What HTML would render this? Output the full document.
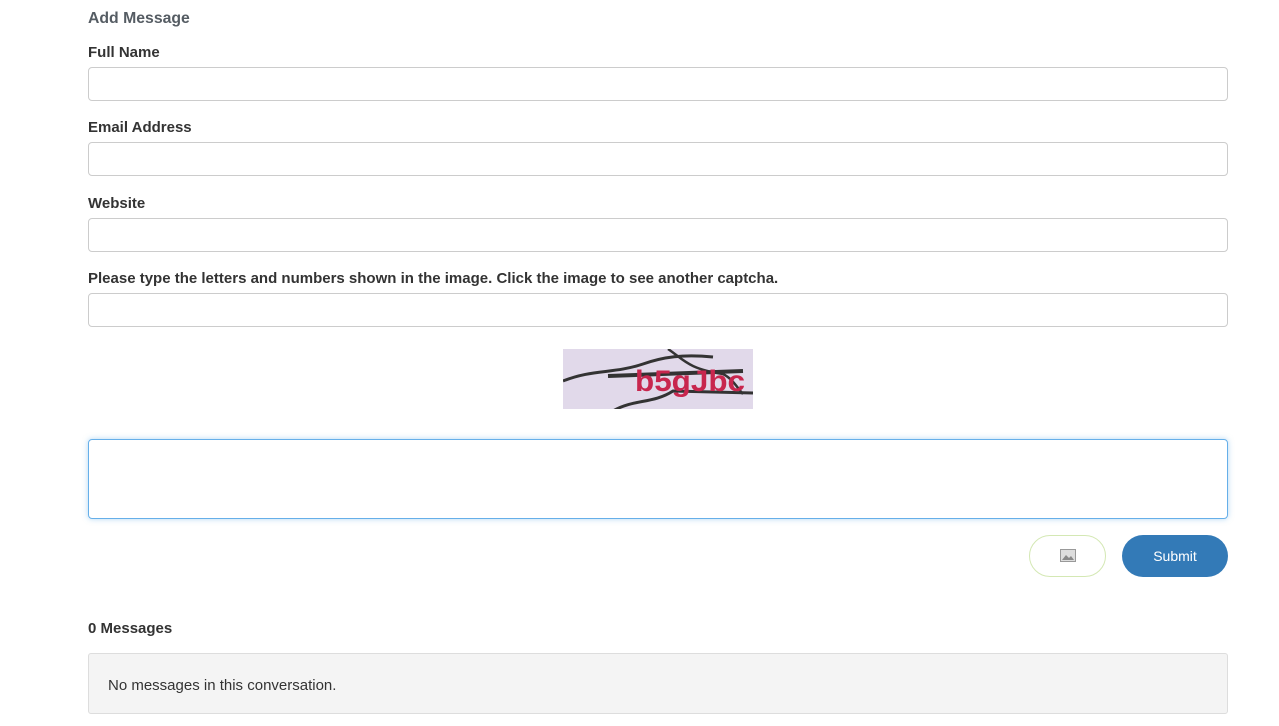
<!DOCTYPE html>
<html><head><style>
body{margin:0;background:#fff;font-family:"Liberation Sans",sans-serif;color:#333;font-size:15px}
h4{position:absolute;left:88px;top:10px;margin:0;font-size:15.8px;color:#555c63;font-weight:bold}
label{position:absolute;left:88px;font-weight:bold;font-size:15px}
.in{position:absolute;left:88px;width:1138px;height:32px;border:1px solid #ccc;border-radius:4px;background:#fff}
</style></head><body>
<h4>Add Message</h4>
<label style="top:44px">Full Name</label>
<div class="in" style="top:67px"></div>
<label style="top:119px">Email Address</label>
<div class="in" style="top:142px"></div>
<label style="top:195px">Website</label>
<div class="in" style="top:218px"></div>
<label style="top:270px">Please type the letters and numbers shown in the image. Click the image to see another captcha.</label>
<div class="in" style="top:293px"></div>
<svg style="position:absolute;left:563px;top:349px" width="190" height="60">
<rect width="190" height="60" fill="#e1d9ea"/>
<path d="M0 32 C30 20 50 25 80 15 C100 8 120 5 150 8" stroke="#333" stroke-width="3" fill="none"/>
<path d="M45 27 L180 22" stroke="#333" stroke-width="4" fill="none"/>
<path d="M50 62 C70 50 90 55 110 42 L190 44" stroke="#333" stroke-width="3" fill="none"/>
<path d="M105 0 C120 10 125 20 160 25 C170 30 175 40 180 45" stroke="#333" stroke-width="2.5" fill="none"/>
<text x="72" y="42" font-size="30" font-weight="bold" fill="#c8264e" font-family="Liberation Sans" textLength="110" lengthAdjust="spacingAndGlyphs">b5gJbc</text>
</svg>
<div style="position:absolute;left:88px;top:439px;width:1138px;height:78px;border:1px solid #66afe9;border-radius:4px;box-shadow:0 0 6px rgba(102,175,233,.5)"></div>
<div style="position:absolute;left:1029px;top:535px;width:75px;height:40px;border:1px solid #d4e8b4;border-radius:21px;background:#fff"></div>
<svg style="position:absolute;left:1060px;top:549px" width="16" height="13"><rect x="0.5" y="0.5" width="15" height="12" fill="#ddd" stroke="#999"/><path d="M2 11 L6 6 L9 9 L11 7 L14 11Z" fill="#888"/></svg>
<div style="position:absolute;left:1122px;top:535px;width:106px;height:42px;border-radius:21px;background:#337ab7;color:#fff;text-align:center;line-height:42px;font-size:14px">Submit</div>
<label style="top:620px">0 Messages</label>
<div style="position:absolute;left:88px;top:653px;width:1138px;height:59px;border:1px solid #ddd;border-radius:3px;background:#f4f4f4"><div style="position:absolute;left:19px;top:23px">No messages in this conversation.</div></div>
</body></html>
